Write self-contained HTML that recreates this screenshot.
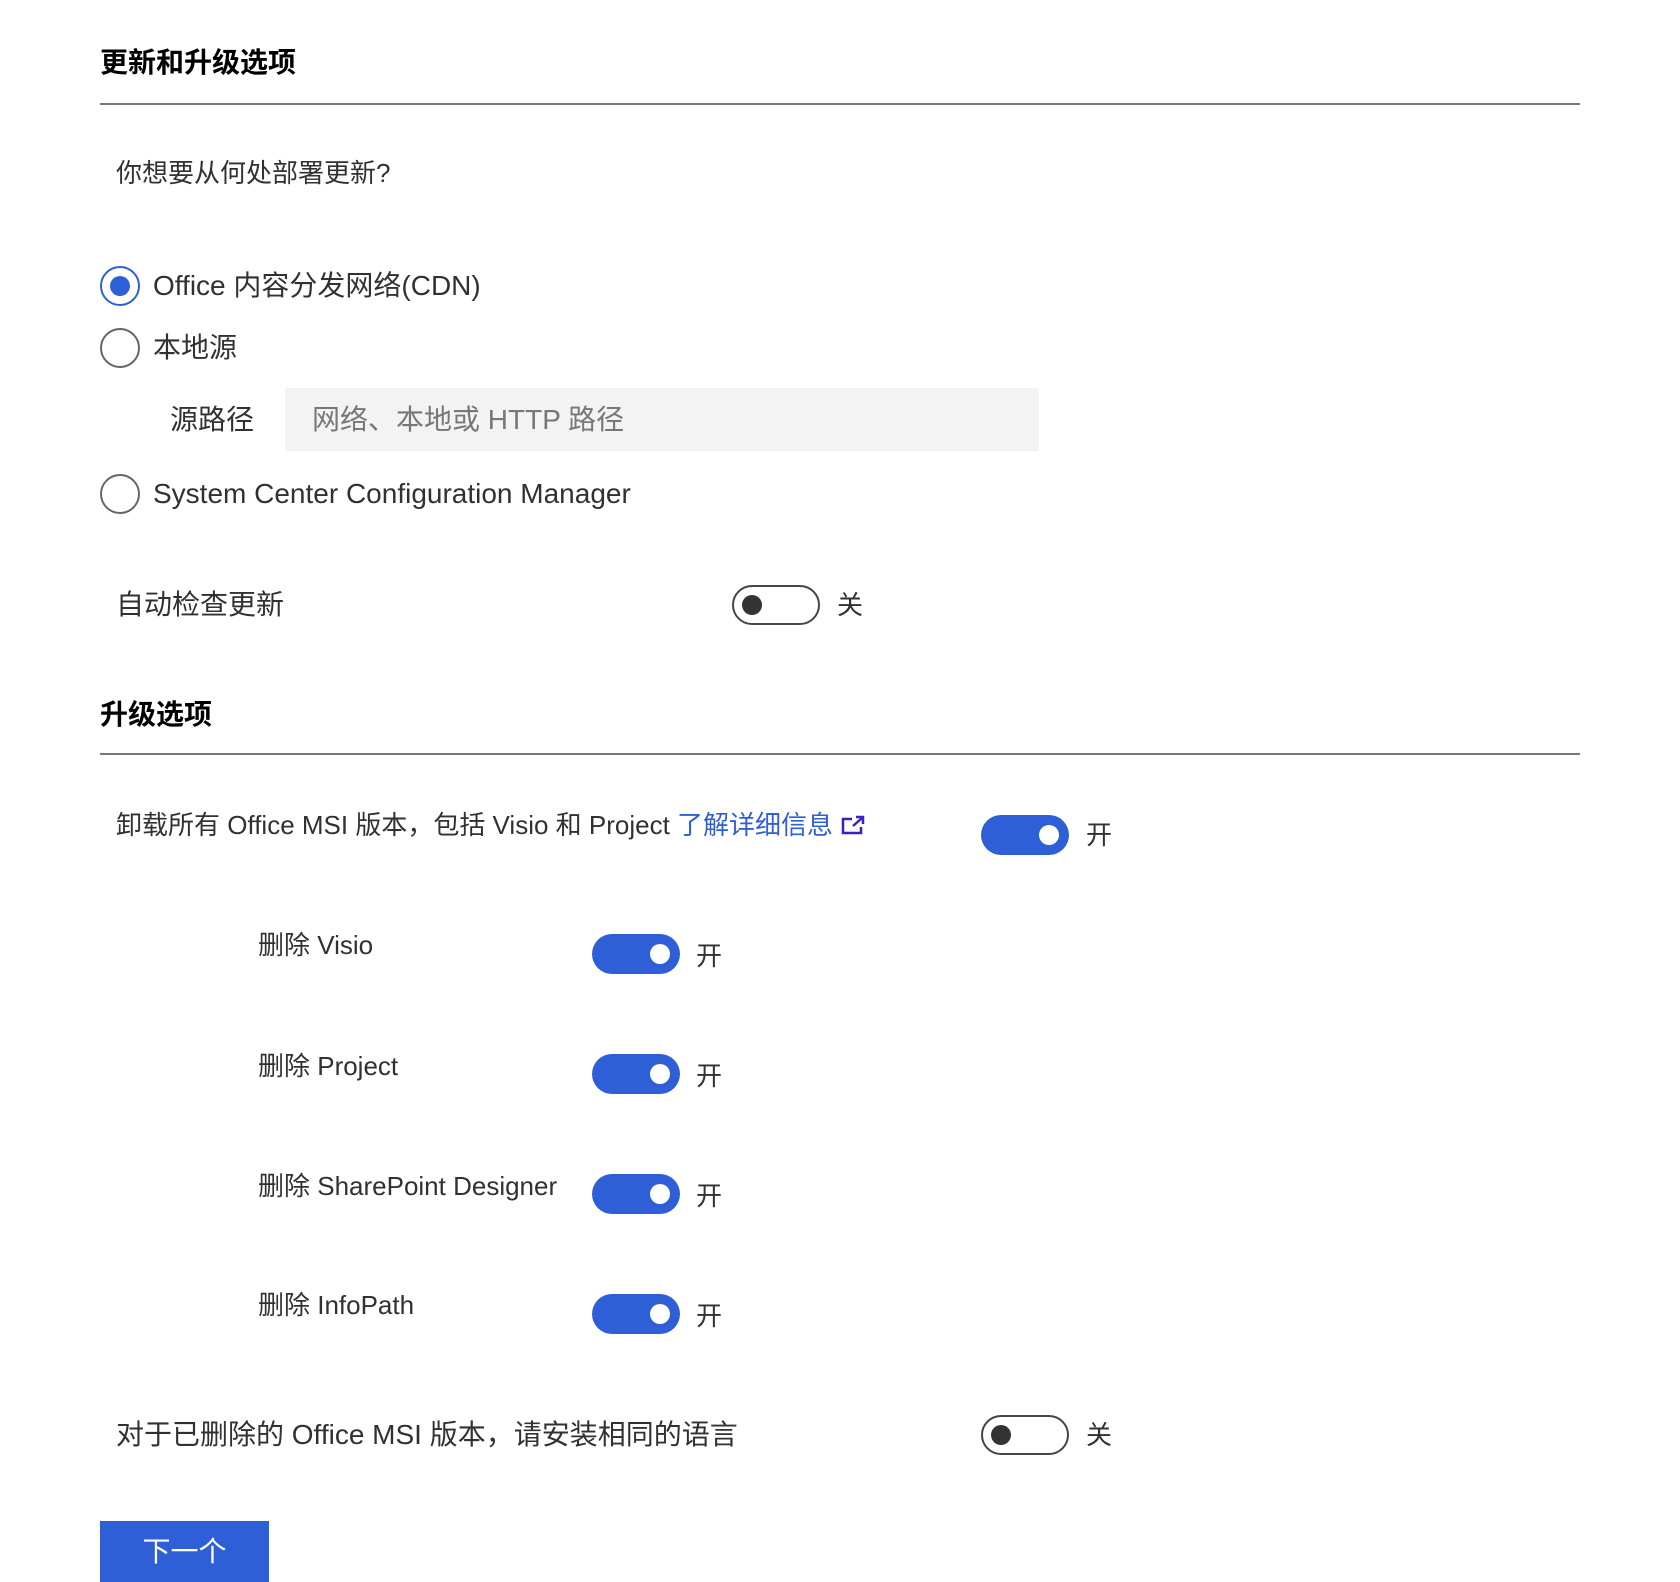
<!DOCTYPE html>
<html><head><meta charset="utf-8"><style>
*{margin:0;padding:0;box-sizing:border-box}
body{width:1680px;height:1582px;background:#fff;position:relative;overflow:hidden;font-family:"Liberation Sans","Noto Sans CJK SC",sans-serif;color:#323130}
.t{position:absolute;line-height:40px;height:40px;white-space:nowrap;font-size:26px}
.b{font-weight:bold;color:#000;font-size:28px}
.hr{position:absolute;left:100px;width:1480px;height:2px;background:#777}
.radio{position:absolute;width:40px;height:40px;border:2px solid #666;border-radius:50%}
.radio.on{border-color:#2f5fd6}
.radio.on::after{content:"";position:absolute;left:8px;top:8px;width:20px;height:20px;border-radius:50%;background:#2f5fd6}
.tg{position:absolute;width:88px;height:40px;border-radius:20px}
.tg.off{border:2px solid #444;background:#fff}
.tg.off::after{content:"";position:absolute;left:8px;top:8px;width:20px;height:20px;border-radius:50%;background:#333}
.tg.on{background:#2f5fd6}
.tg.on::after{content:"";position:absolute;right:10px;top:10px;width:20px;height:20px;border-radius:50%;background:#fff}
</style></head><body>
<div class="t b" style="left:100px;top:43px">更新和升级选项</div>
<div class="hr" style="top:103px"></div>
<div class="t" style="left:116px;top:153px">你想要从何处部署更新?</div>

<div class="radio on" style="left:100px;top:266px"></div>
<div class="t" style="left:153px;top:266px;font-size:28px">Office 内容分发网络(CDN)</div>
<div class="radio" style="left:100px;top:328px"></div>
<div class="t" style="left:153px;top:328px;font-size:28px">本地源</div>
<div class="t" style="left:170px;top:400px;font-size:28px">源路径</div>
<div style="position:absolute;left:285px;top:388px;width:754px;height:63px;background:#f3f3f3"></div>
<div class="t" style="left:312px;top:400px;font-size:28px;color:#777">网络、本地或 HTTP 路径</div>
<div class="radio" style="left:100px;top:474px"></div>
<div class="t" style="left:153px;top:474px;font-size:28px">System Center Configuration Manager</div>

<div class="t" style="left:116px;top:585px;font-size:28px">自动检查更新</div>
<div class="tg off" style="left:732px;top:585px"></div>
<div class="t" style="left:837px;top:585px">关</div>

<div class="t b" style="left:100px;top:695px">升级选项</div>
<div class="hr" style="top:753px"></div>

<div class="t" style="left:116px;top:805px">卸载所有 Office MSI 版本，包括 Visio 和 Project <span style="color:#2f5fd6">了解详细信息</span> <svg width="26" height="22" viewBox="0 0 26 22" style="vertical-align:-2px"><path d="M12 5H3v14h18v-6" fill="none" stroke="#3a1fc4" stroke-width="2.5"/><path d="M13 12L22 4M16 3h7v7" fill="none" stroke="#3a1fc4" stroke-width="2.5"/></svg></div>
<div class="tg on" style="left:981px;top:815px"></div>
<div class="t" style="left:1086px;top:815px">开</div>

<div class="t" style="left:258px;top:925px">删除 Visio</div>
<div class="tg on" style="left:592px;top:934px"></div>
<div class="t" style="left:696px;top:936px">开</div>

<div class="t" style="left:258px;top:1046px">删除 Project</div>
<div class="tg on" style="left:592px;top:1054px"></div>
<div class="t" style="left:696px;top:1056px">开</div>

<div class="t" style="left:258px;top:1166px">删除 SharePoint Designer</div>
<div class="tg on" style="left:592px;top:1174px"></div>
<div class="t" style="left:696px;top:1176px">开</div>

<div class="t" style="left:258px;top:1285px">删除 InfoPath</div>
<div class="tg on" style="left:592px;top:1294px"></div>
<div class="t" style="left:696px;top:1296px">开</div>

<div class="t" style="left:116px;top:1415px;font-size:28px">对于已删除的 Office MSI 版本，请安装相同的语言</div>
<div class="tg off" style="left:981px;top:1415px"></div>
<div class="t" style="left:1086px;top:1415px">关</div>

<div style="position:absolute;left:100px;top:1521px;width:169px;height:61px;background:#2f5fd6;color:#fff;font-size:28px;line-height:61px;text-align:center">下一个</div>
</body></html>
